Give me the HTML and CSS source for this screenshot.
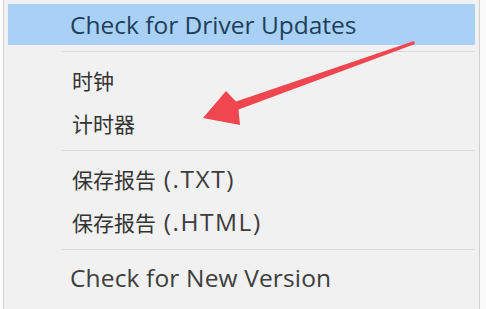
FILE: index.html
```html
<!DOCTYPE html>
<html lang="zh-CN">
<head>
<meta charset="utf-8">
<title>Menu</title>
<link rel="stylesheet" href="styles.css">
</head>
<body>
<div class="menu">
  <div class="item active">Check for Driver Updates</div>
  <div class="sep"></div>
  <div class="item"><span class="cjk">时钟</span></div>
  <div class="item"><span class="cjk">计时器</span></div>
  <div class="sep"></div>
  <div class="item"><span class="cjk">保存报告</span><span class="ext">&nbsp;(.TXT)</span></div>
  <div class="item"><span class="cjk">保存报告</span><span class="ext">&nbsp;(.HTML)</span></div>
  <div class="sep"></div>
  <div class="item wide">Check for New Version</div>
</div>
<svg class="arrow" width="486" height="309" viewBox="0 0 486 309" aria-hidden="true">
  <polygon points="414,41 236,101.5 226,91 203,118 240,125 238.5,109.5 415,44" fill="#ef4650"/>
</svg>
</body>
</html>
```

FILE: styles.css
```css
html, body {
  margin: 0;
  padding: 0;
  background: #fbfbfb;
  width: 486px;
  height: 309px;
  overflow: hidden;
}
body {
  padding-left: 3px;
  box-sizing: border-box;
  position: relative;
}
.menu {
  width: 477px;
  height: 320px;
  box-sizing: border-box;
  background: #f1f1f1;
  border-left: 1px solid #d2d2d2;
  border-right: 1px solid #cfcfcf;
  padding: 4px 4px 0 4px;
  font-family: "Open Sans", "Noto Sans CJK SC", sans-serif;
  font-size: 24.5px;
  color: #3d3d3d;
}
.item {
  height: 43px;
  display: flex;
  align-items: center;
  padding-left: 62px;
  white-space: pre;
}
.item.active {
  height: 41px;
  background: #a9d1f5;
  color: #1f3e5c;
}
.item.wide {
  letter-spacing: 0.15px;
}
.cjk {
  font-family: "Noto Sans CJK SC", sans-serif;
  font-size: 21px;
  color: #333;
  margin-left: 2px;
}
.ext {
  letter-spacing: 1.5px;
}
.sep {
  height: 1px;
  margin: 6px 0 6px 54px;
  background: #dcdcdc;
}
.arrow {
  position: absolute;
  left: 0;
  top: 0;
  filter: blur(0.5px);
}
```
